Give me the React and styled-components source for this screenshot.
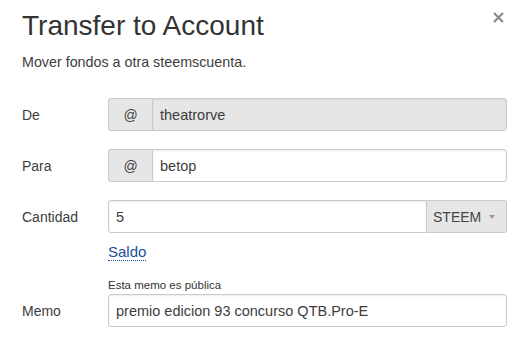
import styled, { createGlobalStyle } from "styled-components";

const GlobalStyle = createGlobalStyle`
  html, body {
    margin: 0;
    padding: 0;
    background: #fff;
  }
  body {
    font-family: "Liberation Sans", Arial, sans-serif;
    color: #3d3d3d;
    overflow: hidden;
  }
`;

const Modal = styled.div`
  position: relative;
  width: 529px;
  height: 351px;
  box-sizing: border-box;
  padding: 10px 22px 0;
  background: #fff;
`;

const Title = styled.h1`
  margin: 0;
  font-size: 28px;
  line-height: 32px;
  font-weight: 400;
  color: #333;
`;

const Subtitle = styled.p`
  margin: 10px 0 0;
  font-size: 14.3px;
  line-height: 20px;
  color: #3d3d3d;
`;

const Close = styled.button`
  position: absolute;
  top: 12px;
  right: 25px;
  width: 11px;
  height: 11px;
  padding: 0;
  border: 0;
  background: none;
  cursor: pointer;
  svg {
    display: block;
  }
`;

const Row = styled.div`
  display: grid;
  grid-template-columns: 86px 1fr;
  align-items: center;
  margin-top: ${(p) => p.$gap}px;
`;

const Label = styled.label`
  font-size: 14px;
  line-height: 20px;
  color: #3d3d3d;
`;

const Group = styled.div`
  display: flex;
  height: 33px;
`;

const Addon = styled.span`
  flex: 0 0 44px;
  box-sizing: border-box;
  display: flex;
  align-items: center;
  justify-content: center;
  background: #e6e6e6;
  border: 1px solid #cacaca;
  border-right: 0;
  border-radius: 3px 0 0 3px;
  font-size: 14px;
  color: #444;
`;

const Input = styled.input`
  flex: 1;
  min-width: 0;
  box-sizing: border-box;
  height: 33px;
  margin: 0;
  padding: 0 7px;
  border: 1px solid #cacaca;
  border-radius: ${(p) => p.$radius};
  background: ${(p) => (p.disabled ? "#e6e6e6" : "#fff")};
  box-shadow: inset 0 1px 2px rgba(10, 10, 10, 0.08);
  font-family: "Liberation Sans", Arial, sans-serif;
  font-size: 14.5px;
  color: #3d3d3d;
  outline: none;
  &:disabled {
    color: #3d3d3d;
    -webkit-text-fill-color: #3d3d3d;
    opacity: 1;
  }
`;

const Select = styled.div`
  flex: 0 0 80px;
  box-sizing: border-box;
  display: flex;
  align-items: center;
  gap: 8px;
  padding: 0 0 0 6px;
  background: #e6e6e6;
  border: 1px solid #cacaca;
  border-left: 0;
  border-radius: 0 3px 3px 0;
  font-size: 14px;
  color: #444;
`;

const Caret = styled.span`
  width: 0;
  height: 0;
  border-left: 3px solid transparent;
  border-right: 3px solid transparent;
  border-top: 4px solid #999;
  margin-top: 1px;
`;

const Field = styled.div`
  grid-column: 2;
`;

const Link = styled.a`
  font-size: 15px;
  line-height: 20px;
  color: #1a5099;
  text-decoration: none;
  border-bottom: 1px dotted #1a5099;
  cursor: pointer;
`;

const Hint = styled.div`
  grid-column: 2;
  font-size: 11.5px;
  line-height: 14px;
  color: #333;
`;

export default function App() {
  return (
    <>
      <GlobalStyle />
      <Modal>
        <Close aria-label="Cerrar">
          <svg width="11" height="11" viewBox="0 0 11 11">
            <path
              d="M1 1 L10 10 M10 1 L1 10"
              stroke="#8a8a8a"
              strokeWidth="2.2"
              fill="none"
            />
          </svg>
        </Close>
        <Title>Transfer to Account</Title>
        <Subtitle>Mover fondos a otra steemscuenta.</Subtitle>

        <Row $gap={26}>
          <Label>De</Label>
          <Group>
            <Addon>@</Addon>
            <Input disabled defaultValue="theatrorve" $radius="0 3px 3px 0" />
          </Group>
        </Row>

        <Row $gap={18}>
          <Label>Para</Label>
          <Group>
            <Addon>@</Addon>
            <Input defaultValue="betop" $radius="0 3px 3px 0" />
          </Group>
        </Row>

        <Row $gap={18}>
          <Label>Cantidad</Label>
          <Group>
            <Input defaultValue="5" $radius="3px 0 0 3px" />
            <Select>
              STEEM
              <Caret />
            </Select>
          </Group>
        </Row>

        <Row $gap={9}>
          <Field>
            <Link>Saldo</Link>
          </Field>
        </Row>

        <Row $gap={16}>
          <Hint>Esta memo es pública</Hint>
        </Row>

        <Row $gap={2}>
          <Label>Memo</Label>
          <Group>
            <Input
              defaultValue="premio edicion 93 concurso QTB.Pro-E"
              $radius="3px"
            />
          </Group>
        </Row>
      </Modal>
    </>
  );
}
